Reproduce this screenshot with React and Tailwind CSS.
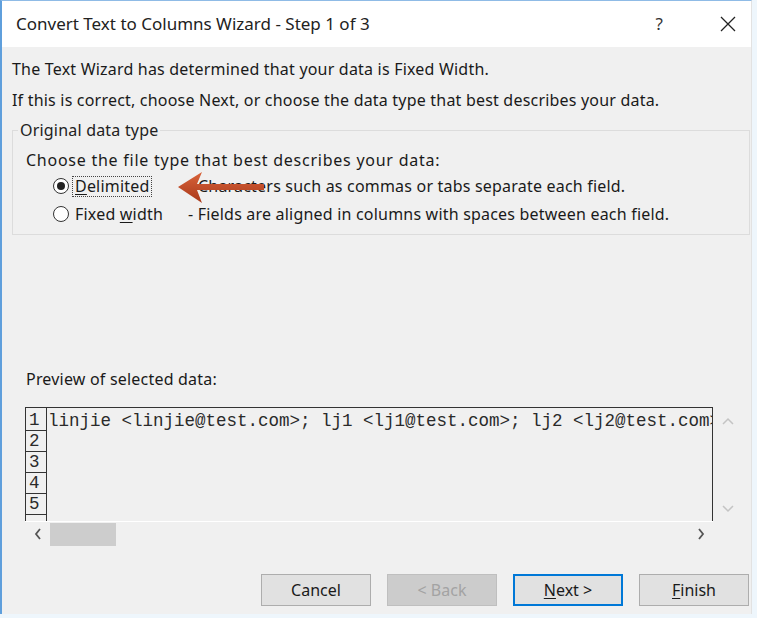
import React from 'react';

const ui = { fontFamily: '"Noto Sans", "Open Sans", sans-serif' };
const mono = { fontFamily: '"Liberation Mono", "Courier New", monospace' };

function Radio({ checked, children }) {
  return (
    <div className="flex items-center h-[28px]">
      <span className="w-[16px] h-[16px] rounded-full border border-[#333] bg-white flex items-center justify-center ml-[27px]">
        {checked && <span className="w-[8px] h-[8px] rounded-full bg-[#222]" />}
      </span>
      {children}
    </div>
  );
}

function Button({ children, variant }) {
  const base = 'w-[110px] h-[32px] flex items-center justify-center text-[16px]';
  if (variant === 'disabled')
    return <div className={`${base} bg-[#cccccc] border border-[#bfbfbf] text-[#a3a3a3]`}>{children}</div>;
  if (variant === 'default')
    return <div className={`${base} bg-[#e1e1e1] border-2 border-[#0078d7] text-[#1a1a1a]`}>{children}</div>;
  return <div className={`${base} bg-[#e1e1e1] border border-[#adadad] text-[#1a1a1a]`}>{children}</div>;
}

export default function App() {
  const rows = [1, 2, 3, 4, 5];
  return (
    <div className="w-[757px] h-[618px] bg-[#eef6fc] overflow-hidden" style={ui}>
      <div className="relative w-[752px] h-[614px] bg-[#f0f0f0] border-l-2 border-t border-r border-l-[#5f9fdc] border-t-[#8fbbe6] border-r-[#e2e2e2] flex flex-col">
        {/* Title bar */}
        <div className="h-[46px] bg-white flex items-center shrink-0">
          <span className="ml-[14px] text-[17px] text-[#222]">
            Convert Text to Columns Wizard - Step 1 of 3
          </span>
          <span className="ml-auto text-[17px] text-[#333] mr-[57px]">?</span>
          <svg width="16" height="16" viewBox="0 0 16 16" className="mr-[15px]">
            <path d="M1 1 L15 15 M15 1 L1 15" stroke="#222" strokeWidth="1.3" />
          </svg>
        </div>

        {/* Body */}
        <div className="flex-1 flex flex-col pl-[10px] text-[16px] tracking-[0.2px] text-[#1a1a1a]">
          <div className="mt-[12px] leading-[20px]">The Text Wizard has determined that your data is Fixed Width.</div>
          <div className="mt-[11px] leading-[20px]">
            If this is correct, choose Next, or choose the data type that best describes your data.
          </div>

          <fieldset className="mt-[10px] mr-[1px] border border-[#dcdcdc] pl-[13px] pb-[6px]">
            <legend className="ml-[-8px] px-[2px] leading-[20px] text-[#222]">Original data type</legend>
            <div className="leading-[20px] mt-[10px] tracking-[0.75px]">Choose the file type that best describes your data:</div>
            <div className="mt-[2px]">
              <Radio checked>
                <span className="ml-[3px] px-[2px] border border-dotted border-[#444] leading-[19px] w-[80px] shrink-0">
                  <span className="underline underline-offset-2">D</span>elimited
                </span>
                <span className="ml-[46px] whitespace-nowrap">Characters such as commas or tabs separate each field.</span>
              </Radio>
              <Radio>
                <span className="ml-[6px] w-[113px] shrink-0">
                  Fixed <span className="underline underline-offset-2">w</span>idth
                </span>
                <span className="whitespace-nowrap">- Fields are aligned in columns with spaces between each field.</span>
              </Radio>
            </div>
          </fieldset>

          <div className="mt-[134px] ml-[14px] leading-[20px]">Preview of selected data:</div>

          <div className="mt-[18px] ml-[13px] flex">
            <div className="w-[688px] h-[114px] border-t border-l border-r border-[#333] overflow-hidden bg-[#f0f0f0] tracking-normal" style={mono}>
              {rows.map((n) => (
                <div
                  key={n}
                  className={`flex ${n === 1 ? 'h-[23px]' : 'h-[21px]'} items-end text-[17.5px] leading-[19px] text-[#2a2a2a]`}
                >
                  <div className="w-[21px] h-full flex items-end border-r border-b border-[#333] pl-[3px] shrink-0">{n}</div>
                  <div className="whitespace-nowrap pl-[1px]">
                    {n === 1 ? 'linjie <linjie@test.com>; lj1 <lj1@test.com>; lj2 <lj2@test.com>' : ''}
                  </div>
                </div>
              ))}
              <div className="w-[21px] h-[21px] border-r border-[#333]" />
            </div>
            <div className="w-[30px] h-[114px] flex flex-col items-center justify-between pt-[10px] pb-[8px]">
              <svg width="12" height="8" viewBox="0 0 12 8"><path d="M1 7 L6 2 L11 7" fill="none" stroke="#c4c4c4" strokeWidth="1.5" /></svg>
              <svg width="12" height="8" viewBox="0 0 12 8"><path d="M1 1 L6 6 L11 1" fill="none" stroke="#c4c4c4" strokeWidth="1.5" /></svg>
            </div>
          </div>
          <div className="ml-[13px] w-[688px] h-[25px] border-t border-white flex items-center">
            <svg width="8" height="12" viewBox="0 0 8 12" className="ml-[9px]"><path d="M6 1 L2 6 L6 11" fill="none" stroke="#555" strokeWidth="1.8" /></svg>
            <div className="ml-[8px] w-[66px] h-[23px] bg-[#cdcdcd]" />
            <svg width="8" height="12" viewBox="0 0 8 12" className="ml-auto mr-[8px]"><path d="M2 1 L6 6 L2 11" fill="none" stroke="#555" strokeWidth="1.8" /></svg>
          </div>

          <div className="mt-[28px] flex gap-[16px] pl-[249px] tracking-normal">
            <Button>Cancel</Button>
            <Button variant="disabled">&lt; Back</Button>
            <Button variant="default"><span><span className="underline underline-offset-2">N</span>ext &gt;</span></Button>
            <Button><span><span className="underline underline-offset-2">F</span>inish</span></Button>
          </div>
        </div>

        {/* annotation arrow */}
        <svg className="absolute left-[174px] top-[170px]" width="92" height="34" viewBox="0 0 92 34">
          <defs>
            <linearGradient id="ag" x1="0" y1="0" x2="0" y2="1">
              <stop offset="0" stopColor="#d9633a" />
              <stop offset="1" stopColor="#a8381a" />
            </linearGradient>
          </defs>
          <path d="M2 16 L26 1 L21 13 L88 13 L88 19 L21 19 L26 32 Z" fill="url(#ag)" />
        </svg>
      </div>
    </div>
  );
}
